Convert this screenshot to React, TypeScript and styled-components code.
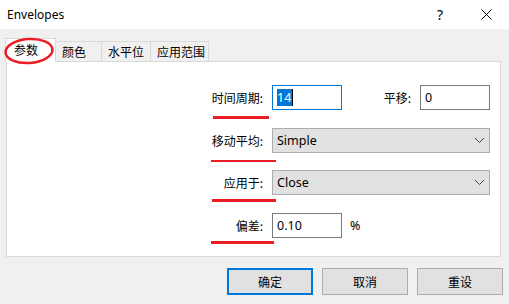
import styled, { createGlobalStyle } from "styled-components";

const GlobalStyle = createGlobalStyle`
  html, body {
    margin: 0;
    padding: 0;
    background: #f0f0f0;
  }
  body {
    font-family: "Noto Sans", "Noto Sans CJK SC", sans-serif;
    font-size: 12px;
    color: #000;
  }
`;

const cjk = `"Noto Sans CJK SC", "Noto Sans", sans-serif`;
const red = "#ec1c24";

const Window = styled.div`
  width: 509px;
  height: 304px;
  display: flex;
  flex-direction: column;
  background: #f0f0f0;
  overflow: hidden;
`;

const TitleBar = styled.div`
  height: 29px;
  flex-shrink: 0;
  background: #fff;
  display: flex;
  align-items: center;
  padding-left: 7px;
`;

const Title = styled.div`
  flex: 1;
  font-size: 12px;
`;

const TitleButton = styled.div`
  width: 46px;
  height: 29px;
  display: flex;
  align-items: center;
  justify-content: center;
  font-size: 14px;
`;

const Body = styled.div`
  padding-top: 9px;
`;

const TabStrip = styled.div`
  position: relative;
  display: flex;
  align-items: flex-end;
  height: 23px;
  padding-left: 5px;
`;

const Tab = styled.div<{ $active?: boolean; $w: number }>`
  position: relative;
  box-sizing: border-box;
  width: ${(p) => p.$w}px;
  height: ${(p) => (p.$active ? 24 : 20)}px;
  margin-bottom: ${(p) => (p.$active ? -1 : 0)}px;
  margin-left: ${(p) => (p.$active ? 0 : -1)}px;
  z-index: ${(p) => (p.$active ? 2 : 1)};
  padding-left: ${(p) => (p.$active ? 8 : 6)}px;
  padding-top: ${(p) => (p.$active ? 3 : 0)}px;
  display: flex;
  align-items: ${(p) => (p.$active ? "flex-start" : "center")};
  background: ${(p) => (p.$active ? "#fff" : "#f0f0f0")};
  border: 1px solid #d9d9d9;
  border-bottom: none;
  font-family: ${cjk};
  font-size: 12px;
  line-height: 16px;
  &:first-child {
    margin-left: 0;
  }
`;

const Circle = styled.svg`
  position: absolute;
  left: 0;
  top: 0;
  overflow: visible;
  z-index: 5;
  pointer-events: none;
`;

const Panel = styled.div`
  box-sizing: border-box;
  margin-left: 6px;
  width: 495px;
  height: 196px;
  border: 1px solid #d9d9d9;
  background: #fff;
  padding-top: 23px;
  display: flex;
  flex-direction: column;
  gap: 17.67px;
`;

const Row = styled.div`
  display: flex;
  align-items: center;
  height: 25px;
`;

type Mark = { left: number; width: number; top: number };

// red underline drawn over the screenshot under each label
const Label = styled.div<{ $mark: Mark }>`
  position: relative;
  width: 256px;
  height: 25px;
  line-height: 25px;
  margin-right: 9px;
  text-align: right;
  font-family: ${cjk};
  font-size: 12px;
  &::after {
    content: "";
    position: absolute;
    left: ${(p) => p.$mark.left}px;
    width: ${(p) => p.$mark.width}px;
    top: ${(p) => p.$mark.top}px;
    height: 2.5px;
    background: ${red};
  }
`;

const SideLabel = styled.div`
  width: 69px;
  margin-right: 9px;
  text-align: right;
  font-family: ${cjk};
  font-size: 12px;
`;

const TextBox = styled.div<{ $focused?: boolean }>`
  box-sizing: border-box;
  width: 70px;
  height: 25px;
  display: flex;
  align-items: center;
  padding-left: 4px;
  background: #fff;
  border: 1px solid ${(p) => (p.$focused ? "#0078d7" : "#7a7a7a")};
  font-size: 12.5px;
`;

const Selected = styled.span`
  background: #0078d7;
  color: #fff;
  line-height: 17px;
  padding: 0 1px 0 0;
`;

const Caret = styled.span`
  width: 1px;
  height: 17px;
  background: #000;
`;

const Select = styled.div`
  box-sizing: border-box;
  width: 218px;
  height: 25px;
  display: flex;
  align-items: center;
  justify-content: space-between;
  padding: 0 4px 0 4px;
  background: #e1e1e1;
  border: 1px solid #adadad;
  font-size: 12.5px;
`;

const Unit = styled.div`
  margin-left: 8px;
  font-size: 12.5px;
`;

const Footer = styled.div`
  display: flex;
  justify-content: flex-end;
  gap: 9px;
  padding: 11px 6px 0 0;
`;

const Button = styled.div<{ $default?: boolean }>`
  box-sizing: border-box;
  width: 86px;
  height: 27px;
  display: flex;
  align-items: center;
  justify-content: center;
  background: #e1e1e1;
  border: ${(p) => (p.$default ? "2px solid #0078d7" : "1px solid #adadad")};
  font-family: ${cjk};
  font-size: 12px;
`;

function Chevron() {
  return (
    <svg width="11" height="7" viewBox="0 0 11 7">
      <polyline points="1,1 5.5,5.5 10,1" fill="none" stroke="#444" strokeWidth="1" />
    </svg>
  );
}

const tabs = [
  { name: "参数", w: 51 },
  { name: "颜色", w: 47 },
  { name: "水平位", w: 50 },
  { name: "应用范围", w: 59 },
];

export default function App() {
  return (
    <Window>
      <GlobalStyle />
      <TitleBar>
        <Title>Envelopes</Title>
        <TitleButton>?</TitleButton>
        <TitleButton>
          <svg width="11" height="11" viewBox="0 0 11 11">
            <path d="M0.5 0.5 L10.5 10.5 M10.5 0.5 L0.5 10.5" stroke="#000" strokeWidth="1" />
          </svg>
        </TitleButton>
      </TitleBar>
      <Body>
        <TabStrip>
          {tabs.map((t, i) => (
            <Tab key={t.name} $active={i === 0} $w={t.w}>
              {t.name}
            </Tab>
          ))}
          <Circle width="60" height="30">
            <ellipse
              cx="29"
              cy="13"
              rx="23.5"
              ry="12"
              fill="none"
              stroke={red}
              strokeWidth="2.5"
              transform="rotate(-4 29 13)"
            />
          </Circle>
        </TabStrip>
        <Panel>
          <Row>
            <Label $mark={{ left: 206, width: 56, top: 31 }}>时间周期:</Label>
            <TextBox $focused>
              <Selected>14</Selected>
              <Caret />
            </TextBox>
            <SideLabel>平移:</SideLabel>
            <TextBox>0</TextBox>
          </Row>
          <Row>
            <Label $mark={{ left: 204, width: 65, top: 32 }}>移动平均:</Label>
            <Select>
              <span>Simple</span>
              <Chevron />
            </Select>
          </Row>
          <Row>
            <Label $mark={{ left: 205, width: 64, top: 29 }}>应用于:</Label>
            <Select>
              <span>Close</span>
              <Chevron />
            </Select>
          </Row>
          <Row>
            <Label $mark={{ left: 204, width: 63, top: 28.5 }}>偏差:</Label>
            <TextBox>0.10</TextBox>
            <Unit>%</Unit>
          </Row>
        </Panel>
        <Footer>
          <Button $default>确定</Button>
          <Button>取消</Button>
          <Button>重设</Button>
        </Footer>
      </Body>
    </Window>
  );
}
